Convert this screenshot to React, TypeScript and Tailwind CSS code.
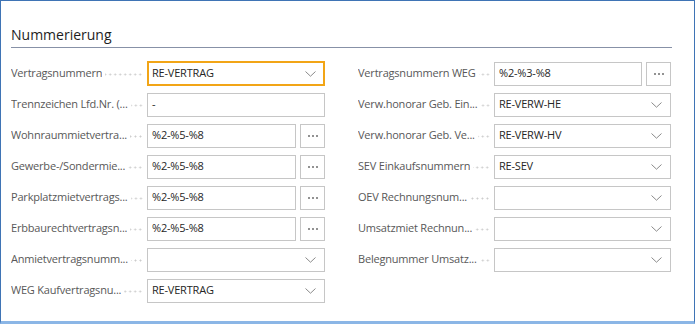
import React from "react";

type Field = {
  label: string;
  value?: string;
  kind: "lookup" | "text" | "assist";
  focused?: boolean;
};

const left: Field[] = [
  { label: "Vertragsnummern", value: "RE-VERTRAG", kind: "lookup", focused: true },
  { label: "Trennzeichen Lfd.Nr. (...", value: "-", kind: "text" },
  { label: "Wohnraummietvertra...", value: "%2-%5-%8", kind: "assist" },
  { label: "Gewerbe-/Sondermie...", value: "%2-%5-%8", kind: "assist" },
  { label: "Parkplatzmietvertrags...", value: "%2-%5-%8", kind: "assist" },
  { label: "Erbbaurechtvertragsn...", value: "%2-%5-%8", kind: "assist" },
  { label: "Anmietvertragsnumm...", value: "", kind: "lookup" },
  { label: "WEG Kaufvertragsnu...", value: "RE-VERTRAG", kind: "lookup" },
];

const right: Field[] = [
  { label: "Vertragsnummern WEG", value: "%2-%3-%8", kind: "assist" },
  { label: "Verw.honorar Geb. Ein...", value: "RE-VERW-HE", kind: "lookup" },
  { label: "Verw.honorar Geb. Ve...", value: "RE-VERW-HV", kind: "lookup" },
  { label: "SEV Einkaufsnummern", value: "RE-SEV", kind: "lookup" },
  { label: "OEV Rechnungsnum...", value: "", kind: "lookup" },
  { label: "Umsatzmiet Rechnun...", value: "", kind: "lookup" },
  { label: "Belegnummer Umsatz...", value: "", kind: "lookup" },
];

function Chevron() {
  return (
    <svg width="11" height="6" viewBox="0 0 11 6" className="shrink-0">
      <path d="M0.5 0.5 L5.5 5.2 L10.5 0.5" fill="none" stroke="#8a8a8a" strokeWidth="1" />
    </svg>
  );
}

function Row({ f }: { f: Field }) {
  const box = f.focused
    ? "border-2 border-[#f2a516] h-[25px] pl-[3px] pr-[7px]"
    : "border border-[#c6c6c6] h-[24px] pl-[4px] pr-[8px]";
  return (
    <div className="flex items-center h-[31px]">
      <div className="flex items-center w-[136px] shrink-0 pr-[4px]">
        <span className="min-w-0 truncate text-[#585858]">{f.label}</span>
        {/* dotted leader between caption and field */}
        <div className="flex-1 min-w-[5px] ml-[3px] mt-[2px] h-[3px] bg-[radial-gradient(circle,#cccccc_0.8px,transparent_1.2px)] bg-[length:5px_3px] bg-repeat-x bg-right" />
      </div>
      {f.kind === "assist" ? (
        <div className="flex flex-1 gap-[4px]">
          <div className={`flex flex-1 items-center ${box} text-[#262626]`}>{f.value}</div>
          <div className="w-[25px] h-[24px] border border-[#c6c6c6] flex items-center justify-center gap-[2px]">
            <span className="w-[2px] h-[2px] rounded-full bg-[#6e6e6e]" />
            <span className="w-[2px] h-[2px] rounded-full bg-[#6e6e6e]" />
            <span className="w-[2px] h-[2px] rounded-full bg-[#6e6e6e]" />
          </div>
        </div>
      ) : (
        <div className={`flex flex-1 items-center justify-between ${box} text-[#262626]`}>
          <span>{f.value}</span>
          {f.kind === "lookup" && <Chevron />}
        </div>
      )}
    </div>
  );
}

export default function App() {
  return (
    <div
      className="w-[695px] h-[324px] bg-white border-l border-t border-r border-[#3f74b5] border-b-[3px] border-b-[#8bb6e6] overflow-hidden"
      style={{ fontFamily: '"Open Sans", "Noto Sans", sans-serif' }}
    >
      <div className="pl-[10px] pr-[22px] pt-[25px]">
        <div className="text-[14px] leading-[18px] text-[#1e1e1e] pb-[3px] border-b border-[#8791a7]">
          Nummerierung
        </div>
        <div className="flex gap-[33px] pt-[10px] text-[11px] tracking-[-0.2px]">
          <div className="w-[314px]">
            {left.map((f, i) => (
              <Row key={i} f={f} />
            ))}
          </div>
          <div className="w-[313px]">
            {right.map((f, i) => (
              <Row key={i} f={f} />
            ))}
          </div>
        </div>
      </div>
    </div>
  );
}
